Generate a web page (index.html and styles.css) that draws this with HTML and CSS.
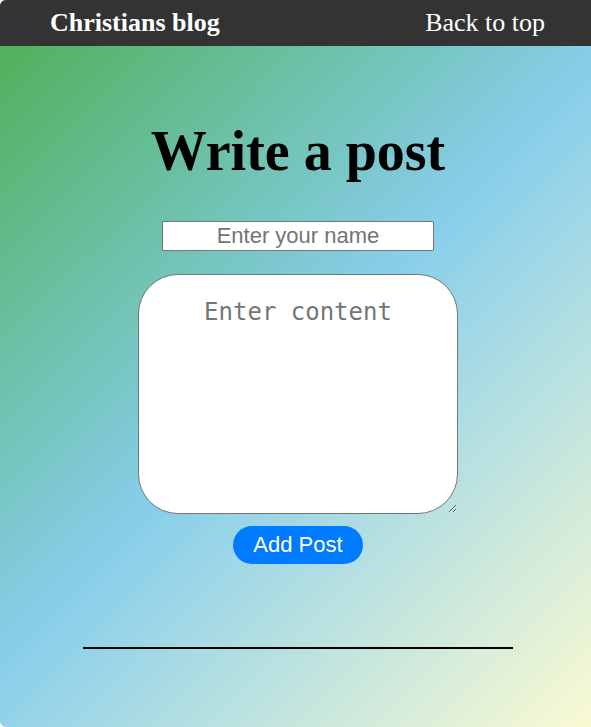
FILE: index.html
```html
<!DOCTYPE html>
<html>
<head>
<meta charset="utf-8">
<link rel="stylesheet" href="styles.css">
</head>
<body>
<div class="page">
  <nav class="navbar">
    <span class="brand">Christians blog</span>
    <span class="top-link">Back to top</span>
  </nav>
  <main class="main">
    <h1 class="title">Write a post</h1>
    <form class="post-form">
      <input class="name-input" type="text" placeholder="Enter your name">
      <textarea class="content-input" placeholder="Enter content"></textarea>
      <button class="add-btn" type="button">Add Post</button>
    </form>
    <hr class="divider">
  </main>
</div>
</body>
</html>
```

FILE: styles.css
```css
html, body {
  margin: 0;
  padding: 0;
  background: #fff;
}
.page {
  width: 591px;
  height: 727px;
  overflow: hidden;
  border-radius: 6px 0 0 6px;
  background: linear-gradient(135deg, #4CAF50, #87CEEB, #FAFAD2);
  font-family: "Liberation Serif", "Times New Roman", serif;
}
.navbar {
  height: 46px;
  background: #333;
  color: #fff;
  display: flex;
  align-items: center;
  justify-content: space-between;
  padding: 0 46px 0 50px;
  font-size: 26px;
}
.brand { font-weight: bold; }
.main {
  display: flex;
  flex-direction: column;
  align-items: center;
  padding-left: 5px;
}
.title {
  font-size: 56px;
  font-weight: bold;
  margin: 73px 0 0;
  line-height: 64px;
}
.post-form {
  display: flex;
  flex-direction: column;
  align-items: center;
  margin-top: 38px;
}
.name-input {
  width: 272px;
  height: 30px;
  box-sizing: border-box;
  border: 1px solid #767676;
  border-radius: 1px;
  font-family: "Liberation Sans", Arial, sans-serif;
  font-size: 22px;
  text-align: center;
  padding: 0;
  background: #fff;
}
.name-input::placeholder { color: #757575; }
.content-input {
  margin-top: 23px;
  width: 320px;
  height: 240px;
  box-sizing: border-box;
  border: 1px solid #767676;
  border-radius: 40px;
  font-family: "DejaVu Sans Mono", monospace;
  font-size: 24px;
  text-align: center;
  padding: 23px 20px 19px;
  background: #fff;
}
.content-input::placeholder { color: #757575; }
.add-btn {
  margin-top: 12px;
  width: 130px;
  height: 38px;
  border: none;
  border-radius: 20px;
  background: #007bff;
  color: #fff;
  font-family: "Liberation Sans", Arial, sans-serif;
  font-size: 22px;
  padding: 0;
}
.divider {
  width: 430px;
  margin: 83px 0 0;
  border: none;
  border-top: 2px solid #000;
  height: 0;
}
```
